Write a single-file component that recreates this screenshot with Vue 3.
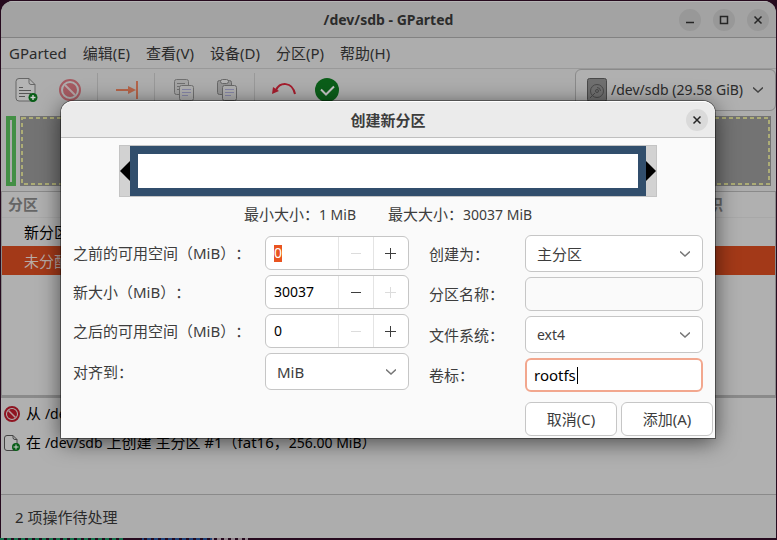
<script setup>
import { ref } from 'vue'

const menus = ['GParted', '编辑(E)', '查看(V)', '设备(D)', '分区(P)', '帮助(H)']

const device = ref('/dev/sdb (29.58 GiB)')
const align = ref('MiB')
const createAs = ref('主分区')
const partName = ref('')
const fileSystem = ref('ext4')
const label = ref('rootfs')

const max = 30037
const spins = ref([
  { id: 'before', label: '之前的可用空间（MiB）：', value: 0, canDec: false, canInc: true, selected: true },
  { id: 'size', label: '新大小（MiB）：', value: 30037, canDec: true, canInc: false },
  { id: 'after', label: '之后的可用空间（MiB）：', value: 0, canDec: false, canInc: true }
])

function step(spin, delta) {
  spin.value = Math.min(max, Math.max(0, Number(spin.value) + delta))
  spin.canDec = spin.value > 0
  spin.canInc = spin.value < max
}
</script>

<template>
  <div class="desktop">
    <main class="window">
      <header class="titlebar">
        <h1>/dev/sdb - GParted</h1>
        <div class="win-buttons">
          <button class="round" aria-label="最小化">
            <svg viewBox="0 0 22 22"><path d="M7 13.5h8" /></svg>
          </button>
          <button class="round" aria-label="最大化">
            <svg viewBox="0 0 22 22"><path d="M7.5 7.5h7v7h-7z" /></svg>
          </button>
          <button class="round" aria-label="关闭">
            <svg viewBox="0 0 22 22"><path d="M7.5 7.5l7 7M14.5 7.5l-7 7" /></svg>
          </button>
        </div>
      </header>

      <nav class="menubar">
        <button v-for="m in menus" :key="m">{{ m }}</button>
      </nav>

      <div class="toolbar">
        <button class="tool" aria-label="新建">
          <svg width="24" height="26" viewBox="0 0 24 26" fill="none">
            <path d="M4 1.5h10l6 6V21a3 3 0 0 1-3 3H4a3 3 0 0 1-3-3V4.5a3 3 0 0 1 3-3z" fill="#b4b4b4" stroke="#666" />
            <path d="M14 1.5v4a2 2 0 0 0 2 2h4" stroke="#666" />
            <path d="M4 10.5h4M4 13.5h12M4 16.5h12M4 19.5h6" stroke="#555" />
            <circle cx="18" cy="20.5" r="4.5" fill="#075d16" />
            <path d="M18 18v5M15.5 20.5h5" stroke="#d0d0d0" stroke-width="1.4" />
          </svg>
        </button>
        <button class="tool" aria-label="删除">
          <svg width="22" height="22" viewBox="0 0 22 22" fill="none" stroke="#a65b62">
            <circle cx="11" cy="11" r="10" stroke-width="2" />
            <circle cx="11" cy="11" r="7" fill="#a65b62" stroke="none" />
            <path d="M6 6l10 10" stroke="#b8a5a6" stroke-width="2" />
          </svg>
        </button>
        <span class="sep"></span>
        <button class="tool" aria-label="调整大小">
          <svg width="22" height="20" viewBox="0 0 22 20">
            <path d="M0 9h12V6l8 4-8 4v-3H0zM20 1h2v18h-2z" fill="#b5654a" />
          </svg>
        </button>
        <span class="sep"></span>
        <button class="tool" aria-label="复制">
          <svg width="20" height="22" viewBox="0 0 20 22" fill="#a5a5a5" stroke="#707070">
            <rect x=".5" y=".5" width="14" height="15" rx="2" />
            <path d="M3 4.5h8M3 7.5h4M3 10.5h3" />
            <rect x="5.5" y="6.5" width="14" height="15" rx="2" fill="#b0b0b0" />
            <path d="M8 10.5h9M8 13.5h9M8 16.5h6" stroke="#8686a8" />
          </svg>
        </button>
        <button class="tool" aria-label="粘贴">
          <svg width="20" height="22" viewBox="0 0 20 22" fill="#959595" stroke="#686868">
            <rect x=".5" y="1.5" width="14" height="14" rx="2" />
            <rect x="3.5" y=".5" width="8" height="4" rx="2" fill="#b4b4b4" />
            <rect x="5.5" y="6.5" width="14" height="15" rx="2" fill="#b0b0b0" />
            <path d="M8 10.5h9M8 13.5h9M8 16.5h6" stroke="#8686a8" />
          </svg>
        </button>
        <span class="sep"></span>
        <button class="tool" aria-label="撤销">
          <svg width="24" height="20" viewBox="0 0 24 20" fill="none">
            <path d="M4 10C8 2 20 1 23 14" stroke="#a51d2d" stroke-width="2" />
            <path d="M1 7l6 4-7 3z" fill="#a51d2d" />
          </svg>
        </button>
        <button class="tool" aria-label="应用">
          <svg width="24" height="24" viewBox="0 0 24 24" fill="none">
            <circle cx="12" cy="12" r="12" fill="#0b5e19" />
            <path d="M6 11.5l5 5 8-8" stroke="#c4c4c4" stroke-width="2" />
          </svg>
        </button>
        <label class="device">
          <svg class="disk-icon" width="20" height="24" viewBox="0 0 20 24" fill="none" stroke="#4a4a4a">
            <rect x=".5" y=".5" width="19" height="23" rx="2" fill="#707070" />
            <circle cx="10" cy="13" r="6.5" />
            <circle cx="10" cy="13" r="1.5" />
            <path d="M10 9.5a3.5 3.5 0 0 1 3.5 3.5M3 20l5-5" />
          </svg>
          <select v-model="device" aria-label="设备">
            <option>/dev/sdb (29.58 GiB)</option>
          </select>
          <svg class="chevron" width="10" height="6" viewBox="0 0 10 6"><path d="M0 .5l5 4.5 5-4.5" /></svg>
        </label>
      </div>

      <div class="disk">
        <div class="part-new"></div>
        <div class="part-free">
          <svg><rect x="2" y="2" /></svg>
        </div>
      </div>

      <section class="partitions">
        <table>
          <thead>
            <tr><th>分区</th><th class="flags">标识</th></tr>
          </thead>
          <tbody>
            <tr><td>新分区</td><td></td></tr>
            <tr class="active"><td>未分配</td><td></td></tr>
          </tbody>
        </table>
      </section>

      <ul class="operations">
        <li>
          <svg width="16" height="16" viewBox="0 0 16 16" fill="none">
            <circle cx="8" cy="8" r="7" stroke="#8f1421" stroke-width="2" />
            <circle cx="8" cy="8" r="5" fill="#8f1421" />
            <path d="M4.5 4.5l7 7" stroke="#b89a9d" stroke-width="1.5" />
          </svg>
          <span>从 <span class="latin">/dev/sdb</span></span>
        </li>
        <li>
          <svg width="16" height="16" viewBox="0 0 16 16" fill="none">
            <path d="M3 .5h6l4 4V13a2.5 2.5 0 0 1-2.5 2.5H3A2.5 2.5 0 0 1 .5 13V3A2.5 2.5 0 0 1 3 .5z" fill="#b4b4b4" stroke="#444" />
            <path d="M9 .5v2a2 2 0 0 0 2 2h2" stroke="#444" />
            <circle cx="12" cy="12" r="4" fill="#075d16" />
            <path d="M12 9.5v5M9.5 12h5" stroke="#d0d0d0" />
          </svg>
          <span>在 <span class="latin">/dev/sdb</span> 上创建 主分区 #1（fat16，<span class="latin">256.00 MiB</span>）</span>
        </li>
      </ul>

      <footer class="statusbar">2 项操作待处理</footer>
    </main>

    <div class="overlay">
      <form class="dialog" role="dialog" aria-labelledby="dlg-title" @submit.prevent>
        <header class="dialog-title">
          <h2 id="dlg-title">创建新分区</h2>
          <button type="button" class="round light" aria-label="关闭">
            <svg viewBox="0 0 22 22"><path d="M7.5 7.5l7 7M14.5 7.5l-7 7" /></svg>
          </button>
        </header>

        <div class="resizer">
          <svg width="10" height="20" viewBox="0 0 10 20"><path d="M10 0v20L0 10z" /></svg>
          <div class="resizer-part"></div>
          <svg width="10" height="20" viewBox="0 0 10 20"><path d="M0 0v20l10-10z" /></svg>
        </div>

        <div class="limits">
          <span>最小大小：<span class="latin">1 MiB</span></span>
          <span>最大大小：<span class="latin">30037 MiB</span></span>
        </div>

        <div class="fields">
          <div class="group left">
            <template v-for="s in spins" :key="s.id">
              <label :for="s.id">{{ s.label }}</label>
              <div class="spin">
                <input :id="s.id" v-model="s.value" type="text" :class="{ selected: s.selected }">
                <button type="button" :disabled="!s.canDec" aria-label="减少" @click="step(s, -1)">
                  <svg width="12" height="12" viewBox="0 0 12 12"><path d="M1 6.5h10" /></svg>
                </button>
                <button type="button" :disabled="!s.canInc" aria-label="增加" @click="step(s, 1)">
                  <svg width="12" height="12" viewBox="0 0 12 12"><path d="M0 6.5h11M5.5 1v11" /></svg>
                </button>
              </div>
            </template>
            <label for="align">对齐到：</label>
            <div class="combo">
              <select id="align" v-model="align">
                <option>MiB</option>
              </select>
              <svg class="chevron" width="10" height="6" viewBox="0 0 10 6"><path d="M0 .5l5 4.5 5-4.5" /></svg>
            </div>
          </div>

          <div class="group right">
            <label for="create-as">创建为：</label>
            <div class="combo">
              <select id="create-as" v-model="createAs">
                <option>主分区</option>
              </select>
              <svg class="chevron" width="10" height="6" viewBox="0 0 10 6"><path d="M0 .5l5 4.5 5-4.5" /></svg>
            </div>
            <label for="part-name">分区名称：</label>
            <input id="part-name" v-model="partName" class="entry" type="text" disabled>
            <label for="fs">文件系统：</label>
            <div class="combo">
              <select id="fs" v-model="fileSystem" class="latin">
                <option>ext4</option>
              </select>
              <svg class="chevron" width="10" height="6" viewBox="0 0 10 6"><path d="M0 .5l5 4.5 5-4.5" /></svg>
            </div>
            <label for="vol-label">卷标：</label>
            <input id="vol-label" v-model="label" class="entry focused" type="text">
          </div>
        </div>

        <div class="actions">
          <button type="button">取消(C)</button>
          <button type="submit">添加(A)</button>
        </div>
      </form>
    </div>
  </div>
</template>

<style>
body {
  margin: 0;
  background: #260a1e;
}
</style>

<style scoped>
* {
  box-sizing: border-box;
}

.desktop {
  position: relative;
  display: flex;
  min-height: 100vh;
  padding: 1px 1px 2px;
  background: #260a1e;
  color: #2b2b2b;
  font: 15px/22px "Noto Sans", "Noto Sans CJK SC", sans-serif;
  text-spacing-trim: space-all;
}

/* sliver of the terminal below the window */
.desktop::after {
  content: "";
  position: absolute;
  left: 0;
  bottom: 0;
  width: 248px;
  height: 2px;
  background:
    repeating-linear-gradient(90deg, transparent 0 4px, #260a1e 4px 7px),
    linear-gradient(90deg, #16704a 0 124px, #260a1e 124px 142px, #1d4178 142px 212px, #8c8088 212px);
}

button,
input,
select {
  margin: 0;
  padding: 0;
  border: 0;
  background: none;
  color: inherit;
  font: inherit;
}

h1,
h2 {
  margin: 0;
  font-size: 15px;
  line-height: 22px;
  font-weight: 700;
}

h1 {
  font-size: 14px;
}

svg {
  flex: none;
}

.latin {
  font-size: 14px;
}

.window {
  flex: 1;
  display: flex;
  flex-direction: column;
  min-width: 0;
  overflow: hidden;
  border-radius: 12px 12px 0 0;
  background: #adadad;
}

.titlebar {
  display: grid;
  grid-template-columns: 1fr auto 1fr;
  align-items: center;
  height: 37px;
  padding: 0 7px;
  border-top: 1px solid #b5b5b5;
  border-bottom: 1px solid #828282;
  background: #a3a3a3;
}

.titlebar h1 {
  grid-column: 2;
}

.win-buttons {
  display: flex;
  justify-content: flex-end;
  gap: 12px;
}

.round {
  display: flex;
  width: 22px;
  height: 22px;
  border-radius: 50%;
  background: #989898;
}

.round svg {
  width: 22px;
  height: 22px;
  fill: none;
  stroke: #262626;
  stroke-width: 1.5;
}

.menubar {
  display: flex;
  height: 31px;
  padding-left: 8px;
  gap: 16px;
  border-bottom: 1px solid #999;
}

.toolbar {
  display: flex;
  height: 42px;
  padding-left: 4px;
}

.tool {
  display: flex;
  align-items: center;
  justify-content: center;
  width: 43px;
}

.sep {
  width: 1px;
  height: 34px;
  margin: 4px 7px 0 6px;
  background: #999;
}

.device {
  display: flex;
  align-items: center;
  gap: 4px;
  height: 42px;
  margin-left: auto;
  padding: 0 12px 0 11px;
  border: 1px solid #8a8a8a;
  border-radius: 6px;
  background: #b0b0b0;
}

.device select {
  appearance: none;
  width: 138px;
  font-size: 14px;
}

.chevron {
  fill: none;
  stroke: #444;
  stroke-width: 1.5;
}

.disk {
  display: flex;
  gap: 4px;
  height: 70px;
  margin: 5px;
}

.part-new {
  width: 10px;
  border: 4px solid #438f45;
}

.part-free {
  flex: 1;
  display: flex;
  background: #737373;
}

.part-free svg {
  flex: 1;
  width: 100%;
  height: 70px;
}

.part-free rect {
  width: calc(100% - 4px);
  height: calc(100% - 4px);
  fill: none;
  stroke: #acac76;
  stroke-width: 2;
  stroke-dasharray: 4 3;
}

.partitions {
  flex: 1;
  border: 1px solid #8a8a8a;
  background: #b0b0b0;
}

.partitions table {
  width: 100%;
  border-collapse: collapse;
}

.partitions th {
  height: 25px;
  padding: 0 6px;
  border-bottom: 1px solid #a8a8a8;
  color: #666;
  text-align: left;
}

.partitions .flags {
  width: 88px;
}

.partitions td {
  height: 29px;
  padding: 0 22px;
  color: #000;
}

.partitions .active td {
  background: #a33918;
  color: #b8aaa5;
}

.operations {
  height: 99px;
  margin: 0;
  padding: 1px 3px 0;
  border-top: 2px solid #8a8a8a;
  border-bottom: 1px solid #8a8a8a;
  background: #b0b0b0;
  color: #000;
  list-style: none;
}

.operations li {
  display: flex;
  align-items: center;
  gap: 6px;
  height: 29px;
}

.statusbar {
  height: 43px;
  padding: 11px 14px 0;
}

.overlay {
  position: absolute;
  inset: 0;
  padding: 101px 62px 0 61px;
}

.dialog {
  border-radius: 12px 12px 0 0;
  background: #fafafa;
  color: #3d3d3d;
  box-shadow: 0 0 0 1px rgba(0, 0, 0, 0.4), 0 4px 22px rgba(0, 0, 0, 0.6);
}

.dialog-title {
  display: grid;
  grid-template-columns: 1fr auto 1fr;
  align-items: center;
  height: 37px;
  padding: 0 7px;
  border-top: 1px solid #fff;
  border-bottom: 1px solid #bfbfbf;
  border-radius: 12px 12px 0 0;
  background: #ebebeb;
}

.dialog-title h2 {
  grid-column: 2;
}

.light {
  justify-self: end;
  background: #dadada;
}

.resizer {
  display: flex;
  align-items: center;
  height: 52px;
  margin: 7px 58px 6px;
  border: 1px solid #c4c4c4;
  background: #d2d2d2;
}

.resizer-part {
  flex: 1;
  height: 50px;
  border: 8px solid #314e6c;
  background: #fff;
}

.limits {
  display: flex;
  justify-content: center;
  gap: 32px;
  margin-bottom: 9px;
}

.fields {
  display: grid;
  grid-template-columns: 336fr 274fr;
  gap: 20px;
  padding: 0 12px;
}

.group {
  display: grid;
  align-content: start;
  align-items: center;
  gap: 5px 0;
  white-space: nowrap;
}

.left {
  grid-template-columns: 192px 1fr;
  padding-top: 1px;
}

.right {
  grid-template-columns: 96px 1fr;
}

.spin,
.combo,
.entry {
  width: 100%;
  min-width: 0;
  border: 1px solid #c6c6c6;
  border-radius: 6px;
  background: #fff;
}

.spin {
  display: flex;
  height: 34px;
}

.spin input {
  flex: 1;
  min-width: 0;
  padding-left: 8px;
  color: #000;
  font-size: 14px;
}

.spin .selected {
  background: linear-gradient(#e95420, #e95420) 8px center / 8px 17px no-repeat;
  color: #fff;
}

.spin button {
  display: flex;
  align-items: center;
  justify-content: center;
  width: 35px;
  border-left: 1px solid #e4e4e4;
}

.spin svg {
  stroke: #3d3d3d;
  stroke-width: 1;
}

.spin button:disabled svg {
  stroke: #dcdcdc;
}

.combo {
  display: grid;
  align-items: center;
  height: 37px;
}

.combo select,
.combo .chevron {
  grid-area: 1 / 1;
}

.combo select {
  appearance: none;
  width: 100%;
  height: 35px;
  padding: 0 30px 0 11px;
}

.combo .chevron {
  justify-self: end;
  margin-right: 12px;
  stroke: #777;
  pointer-events: none;
}

.entry {
  height: 34px;
  padding: 0 8px;
  color: #000;
}

.entry:disabled {
  background: #fafafa;
}

.entry.focused {
  padding: 0 7px;
  border: 2px solid #f2a78e;
  background: linear-gradient(#000, #000) 50px center / 1px 17px no-repeat #fff;
  outline: none;
}

.actions {
  display: flex;
  justify-content: flex-end;
  gap: 4px;
  padding: 10px 2px 2px;
}

.actions button {
  width: 92px;
  height: 34px;
  border: 1px solid #c6c6c6;
  border-radius: 6px;
  background: #fff;
}
</style>
